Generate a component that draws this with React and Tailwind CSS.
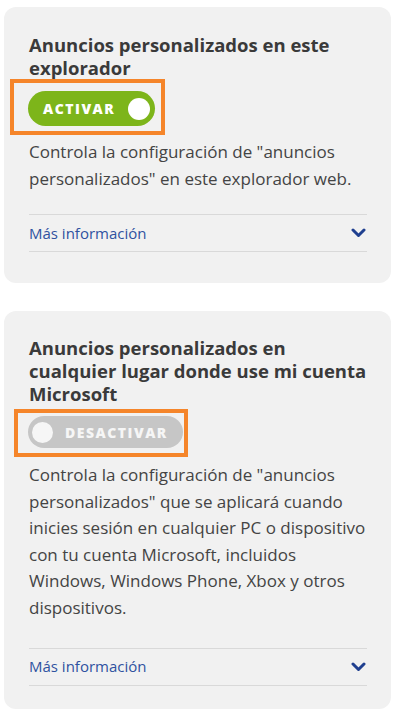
import React from "react";

const font = { fontFamily: '"Open Sans", "Noto Sans", sans-serif' };

const Chevron = () => (
  <svg width="15" height="10" viewBox="0 0 15 10" className="mr-[1px]">
    <polyline
      points="2,2 7.5,7.5 13,2"
      fill="none"
      stroke="#1f3f8f"
      strokeWidth="3"
      strokeLinecap="round"
      strokeLinejoin="round"
    />
  </svg>
);

const MoreInfo = () => (
  <div className="flex items-center justify-between h-[38px] border-t border-b border-[#d9d9d9]">
    <span className="text-[15px] text-[#2f52a0]">Más información</span>
    <Chevron />
  </div>
);

export default function App() {
  return (
    <div className="bg-white min-h-[720px] px-[4px] pt-[7px] pb-[10px] text-[#333]" style={font}>
      <div className="bg-[#f1f1f1] rounded-[12px] pl-[25px] pr-[24px] pt-[26px] pb-[31px]">
        <h2 className="text-[18.5px] leading-[23px] font-bold text-[#3a3a3a]">
          Anuncios personalizados en este explorador
        </h2>
        <div className="ml-[-19px] w-[155px] h-[56px] border-4 border-[#f5852a] pl-[14px] pt-[8px]">
          <div className="w-[127px] h-[35px] rounded-full bg-[#7db51a] flex items-center justify-between pl-[15px] pr-[5px]">
            <span className="text-white font-extrabold text-[14px] tracking-[1.5px]">ACTIVAR</span>
            <span className="w-[22px] h-[22px] rounded-full bg-white" />
          </div>
        </div>
        <p className="mt-[3px] text-[17px] leading-[27px] text-[#444] mb-[22px]">
          Controla la configuración de "anuncios personalizados" en este explorador web.
        </p>
        <MoreInfo />
      </div>

      <div className="mt-[28px] bg-[#f1f1f1] rounded-[12px] pl-[25px] pr-[24px] pt-[25px] pb-[23px]">
        <h2 className="text-[18.5px] leading-[23px] font-bold text-[#3a3a3a]">
          Anuncios personalizados en cualquier lugar donde use mi cuenta Microsoft
        </h2>
        <div className="mt-[4px] ml-[-15px] w-[174px] h-[48px] border-4 border-[#f5852a] pl-[10px] pt-[3px]">
          <div className="w-[155px] h-[32px] rounded-full bg-[#c6c6c6] flex items-center pl-[4px]">
            <span className="w-[21px] h-[21px] rounded-full bg-[#f6f6f6]" />
            <span className="ml-[12px] text-[#f6f6f6] font-extrabold text-[14px] tracking-[1.5px]">DESACTIVAR</span>
          </div>
        </div>
        <p className="mt-[5px] text-[17px] leading-[26.6px] text-[#444] mb-[26px]">
          Controla la configuración de "anuncios personalizados" que se aplicará cuando inicies sesión en cualquier PC o dispositivo con tu cuenta Microsoft, incluidos Windows, Windows Phone, Xbox y otros dispositivos.
        </p>
        <MoreInfo />
      </div>
    </div>
  );
}
